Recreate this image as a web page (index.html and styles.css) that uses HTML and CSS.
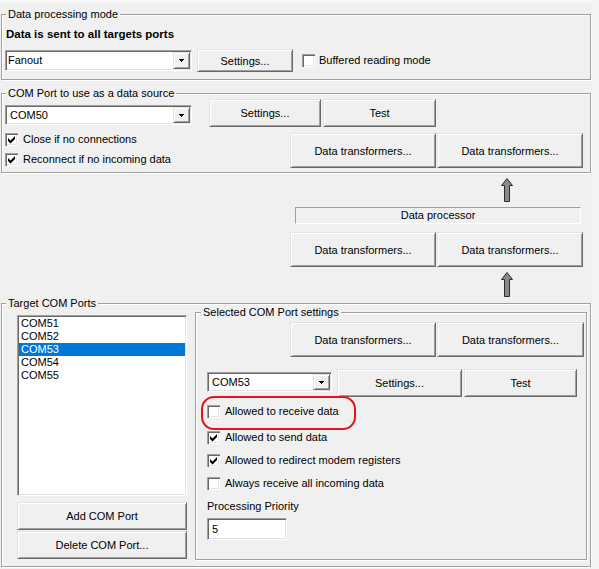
FILE: index.html
```html
<!DOCTYPE html>
<html lang="en">
<head>
<meta charset="utf-8">
<title>Data processing</title>
<link rel="stylesheet" href="styles.css">
</head>
<body>
<div class="window">
  <section class="group group-mode">
    <div class="group-title">Data processing mode</div>
    <div class="mode-desc">Data is sent to all targets ports</div>
    <div class="row mode-row">
      <div class="combo combo-editable combo-fanout">
        <span class="combo-text">Fanout</span>
        <span class="combo-btn"><svg class="combo-arrow" width="5" height="3" viewBox="0 0 5 3"><rect x="0" y="0" width="5" height="1"/><rect x="1" y="1" width="3" height="1"/><rect x="2" y="2" width="1" height="1"/></svg></span>
      </div>
      <button class="btn btn-mode-settings">Settings...</button>
      <div class="check check-buffered"><span class="box"></span><span class="check-label">Buffered reading mode</span></div>
    </div>
  </section>

  <section class="group group-source">
    <div class="group-title">COM Port to use as a data source</div>
    <div class="row source-row">
      <div class="combo combo-com50">
        <span class="combo-text">COM50</span>
        <span class="combo-btn"><svg class="combo-arrow" width="5" height="3" viewBox="0 0 5 3"><rect x="0" y="0" width="5" height="1"/><rect x="1" y="1" width="3" height="1"/><rect x="2" y="2" width="1" height="1"/></svg></span>
      </div>
      <button class="btn btn-source-settings">Settings...</button>
      <button class="btn btn-source-test">Test</button>
    </div>
    <div class="row source-row2">
      <div class="source-checks">
        <div class="check"><span class="box"><svg width="13" height="13" viewBox="0 0 13 13"><path d="M3 5 L5.5 7.5 L10 3 L10 6 L5.5 10.5 L3 8 Z"/></svg></span><span class="check-label">Close if no connections</span></div>
        <div class="check check-gap"><span class="box"><svg width="13" height="13" viewBox="0 0 13 13"><path d="M3 5 L5.5 7.5 L10 3 L10 6 L5.5 10.5 L3 8 Z"/></svg></span><span class="check-label">Reconnect if no incoming data</span></div>
      </div>
      <div class="transformers">
        <button class="btn btn-transformer">Data transformers...</button>
        <button class="btn btn-transformer">Data transformers...</button>
      </div>
    </div>
  </section>

  <div class="pipeline">
    <svg class="flow-arrow arrow-top" width="12" height="24" viewBox="0 0 12 24"><path d="M6 0.5 L11.5 7.5 L8.5 7.5 L8.5 23.5 L3.5 23.5 L3.5 7.5 L0.5 7.5 Z"/></svg>
    <div class="processor">Data processor</div>
    <div class="transformers pipeline-transformers">
      <button class="btn btn-transformer">Data transformers...</button>
      <button class="btn btn-transformer">Data transformers...</button>
    </div>
    <svg class="flow-arrow arrow-bottom" width="12" height="25" viewBox="0 0 12 25"><path d="M6 0.5 L11.5 7.5 L8.5 7.5 L8.5 24.5 L3.5 24.5 L3.5 7.5 L0.5 7.5 Z"/></svg>
  </div>

  <section class="group group-targets">
    <div class="group-title">Target COM Ports</div>
    <div class="targets-row">
      <div class="targets-list-col">
        <div class="listbox">
          <div class="list-item">COM51</div>
          <div class="list-item">COM52</div>
          <div class="list-item selected">COM53</div>
          <div class="list-item">COM54</div>
          <div class="list-item">COM55</div>
        </div>
        <button class="btn btn-list btn-add">Add COM Port</button>
        <button class="btn btn-list btn-delete">Delete COM Port...</button>
      </div>

      <section class="group group-selected">
        <div class="group-title">Selected COM Port settings</div>
        <div class="transformers selected-transformers">
          <button class="btn btn-transformer">Data transformers...</button>
          <button class="btn btn-transformer">Data transformers...</button>
        </div>
        <div class="row selected-row">
          <div class="combo combo-com53">
            <span class="combo-text">COM53</span>
            <span class="combo-btn"><svg class="combo-arrow" width="5" height="3" viewBox="0 0 5 3"><rect x="0" y="0" width="5" height="1"/><rect x="1" y="1" width="3" height="1"/><rect x="2" y="2" width="1" height="1"/></svg></span>
          </div>
          <button class="btn btn-sel-settings">Settings...</button>
          <button class="btn btn-sel-test">Test</button>
        </div>
        <div class="check check-receive"><span class="box"></span><span class="check-label">Allowed to receive data</span></div>
        <div class="check check-send"><span class="box"><svg width="13" height="13" viewBox="0 0 13 13"><path d="M3 5 L5.5 7.5 L10 3 L10 6 L5.5 10.5 L3 8 Z"/></svg></span><span class="check-label">Allowed to send data</span></div>
        <div class="check check-redirect"><span class="box"><svg width="13" height="13" viewBox="0 0 13 13"><path d="M3 5 L5.5 7.5 L10 3 L10 6 L5.5 10.5 L3 8 Z"/></svg></span><span class="check-label">Allowed to redirect modem registers</span></div>
        <div class="check check-always"><span class="box"></span><span class="check-label">Always receive all incoming data</span></div>
        <div class="priority-label">Processing Priority</div>
        <div class="textbox">5</div>
      </section>
    </div>
  </section>
</div>
</body>
</html>
```

FILE: styles.css
```css
* { box-sizing: border-box; }

html, body { margin: 0; padding: 0; }

body {
  width: 599px;
  height: 569px;
  overflow: hidden;
  background: #f5f5f5;
  font-family: "Liberation Sans", Arial, sans-serif;
  font-size: 11px;
  color: #000;
}

.window {
  width: 592px;
  height: 566px;
  margin-top: 3px;
  padding-top: 11px;
  background: #f0f0f0;
}

/* etched group box */
.group {
  border: 1px solid #a0a0a0;
  box-shadow: inset 1px 1px 0 #fff, 1px 1px 0 #fff;
}

.group-title {
  display: table;
  height: 13px;
  line-height: 13px;
  margin-top: -7px;
  padding: 0 2px;
  background: #f0f0f0;
  white-space: nowrap;
}

.row { display: flex; align-items: flex-start; }

/* raised button */
.btn {
  display: block;
  margin: 0;
  padding: 0;
  font: inherit;
  color: #000;
  text-align: center;
  background: #f0f0f0;
  border: 1px solid;
  border-color: #e3e3e3 #696969 #696969 #e3e3e3;
  box-shadow: inset 1px 1px 0 #fff, inset -1px -1px 0 #a0a0a0;
  white-space: nowrap;
}

/* sunken fields */
.combo, .listbox, .textbox {
  background: #fff;
  border: 1px solid;
  border-color: #a0a0a0 #fff #fff #a0a0a0;
  box-shadow: inset 1px 1px 0 #696969, inset -1px -1px 0 #e3e3e3;
}

.combo {
  display: flex;
  padding: 1px;
}

.combo-text {
  flex: 1;
  line-height: 16px;
  padding-left: 3px;
  white-space: nowrap;
}

.combo-editable .combo-text { padding-left: 1px; line-height: 17px; }

.combo-btn {
  width: 17px;
  display: flex;
  align-items: center;
  justify-content: center;
  background: #f0f0f0;
  border: 1px solid;
  border-color: #e3e3e3 #696969 #696969 #e3e3e3;
  box-shadow: inset 1px 1px 0 #fff, inset -1px -1px 0 #a0a0a0;
}

.combo-arrow { display: block; fill: #000; }

/* checkboxes */
.check {
  display: flex;
  align-items: center;
  height: 13px;
}

.box {
  flex: none;
  width: 13px;
  height: 13px;
  background: #fff;
  box-shadow:
    inset 1px 1px 0 #a0a0a0,
    inset 2px 2px 0 #696969,
    inset -1px -1px 0 #fff,
    inset -2px -2px 0 #e3e3e3;
}

.box svg { display: block; fill: #000; }

.check-label {
  margin-left: 5px;
  line-height: 13px;
  white-space: nowrap;
}

/* group 1 */
.group-mode {
  margin-left: 1px;
  width: 590px;
  padding: 0 0 7px 3px;
}
.group-mode .group-title { margin-left: 1px; }

.mode-desc {
  margin-top: 6px;
  padding-left: 1px;
  font-weight: bold;
  font-size: 11.5px;
  line-height: 14px;
}

.mode-row {
  margin-top: 8px;
  height: 23px;
  align-items: center;
}

.combo-fanout { width: 187px; height: 21px; }
.btn-mode-settings { margin-left: 5px; width: 96px; height: 23px; }
.check-buffered { margin-left: 9px; }
.check-buffered .check-label { margin-left: 4px; }

/* group 2 */
.group-source {
  margin: 13px 0 0 1px;
  width: 590px;
  padding: 0 0 4px 3px;
}
.group-source .group-title { margin-left: 1px; }

.source-row { margin-top: -1px; height: 28px; }
.combo-com50 { margin-top: 6px; width: 187px; height: 20px; }
.btn-source-settings { margin-left: 17px; width: 112px; height: 28px; }
.btn-source-test { margin-left: 2px; width: 113px; height: 28px; }

.source-row2 { margin-top: 6px; }
.source-checks { width: 285px; }
.check-gap { margin-top: 7px; }

.transformers { display: flex; gap: 1px; }
.btn-transformer { width: 146px; height: 35px; }

/* pipeline */
.pipeline {
  margin-left: 290px;
  width: 294px;
}

.flow-arrow {
  display: block;
  margin-left: 211px;
  fill: #8a8a8a;
  stroke: #2b2b2b;
  stroke-width: 1;
}
.arrow-top { margin-top: 5px; }
.arrow-bottom { margin-top: 5px; }

.processor {
  margin: 5px 0 0 5px;
  width: 286px;
  height: 17px;
  border: 1px solid;
  border-color: #a0a0a0 #fff #fff #a0a0a0;
  text-align: center;
  line-height: 15px;
}

.pipeline-transformers { margin-top: 8px; }

/* group 3 */
.group-targets {
  margin: 6px 0 0 1px;
  width: 590px;
  padding: 0 0 6px 15px;
}
.group-targets .group-title { margin-left: -11px; }

.targets-row { display: flex; align-items: flex-start; }

.targets-list-col { width: 170px; margin-top: 5px; }

.listbox {
  height: 181px;
  padding: 1px;
}

.list-item {
  height: 13px;
  line-height: 13px;
  padding-left: 2px;
}

.list-item.selected {
  background: #0078d7;
  color: #fff;
}

.btn-list { width: 170px; height: 28px; }
.btn-add { margin-top: 6px; }
.btn-delete { margin-top: 1px; }

/* group 4 */
.group-selected {
  margin: 2px 0 0 8px;
  width: 392px;
  padding: 0 0 19px 11px;
}
.group-selected .group-title { margin-left: -6px; }

.selected-transformers { margin: 3px 0 0 83px; }
.selected-transformers .btn-transformer:last-child { width: 147px; }

.selected-row { margin-top: 12px; height: 28px; }
.combo-com53 { margin-top: 3px; width: 125px; height: 20px; }
.btn-sel-settings { margin-left: 5px; width: 125px; height: 28px; }
.btn-sel-test { margin-left: 2px; width: 113px; height: 28px; }

.check-receive { margin-top: 8px; position: relative; }
.check-receive::after {
  content: "";
  position: absolute;
  left: -6px;
  top: -9px;
  width: 151px;
  height: 30px;
  border: 2.5px solid #e5121b;
  border-radius: 13px;
}

.check-send { margin-top: 13px; }
.check-redirect { margin-top: 10px; }
.check-always { margin-top: 10px; }

.priority-label {
  margin-top: 10px;
  line-height: 13px;
}

.textbox {
  margin-top: 5px;
  width: 80px;
  height: 22px;
  padding-left: 4px;
  line-height: 20px;
}
```
